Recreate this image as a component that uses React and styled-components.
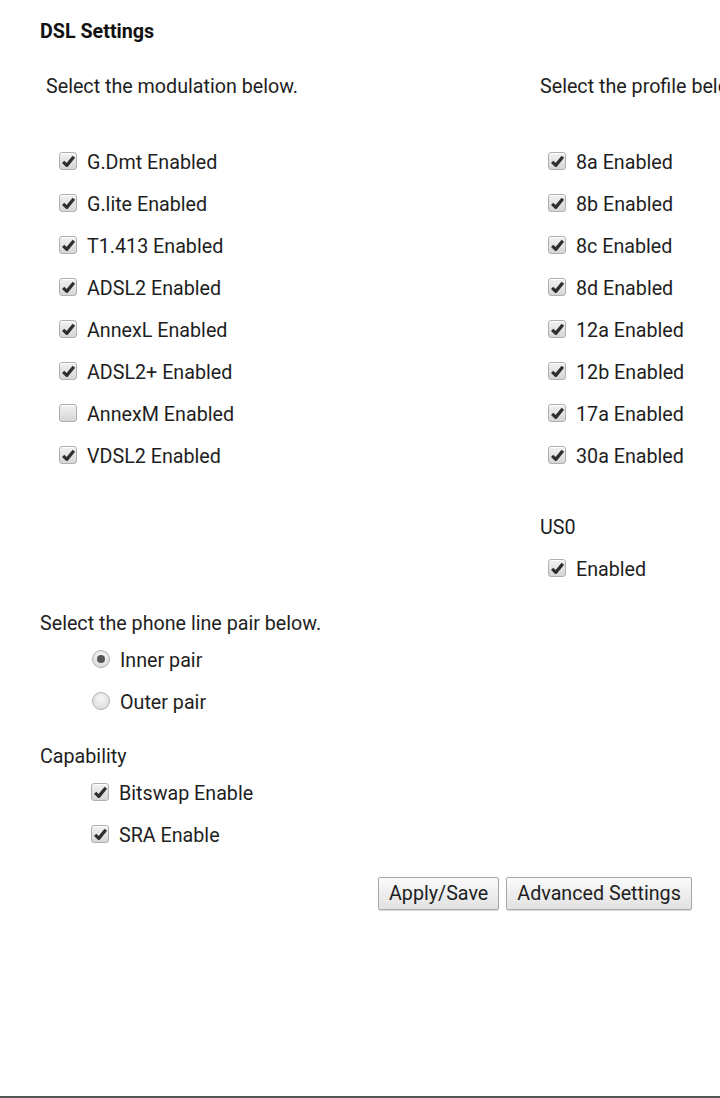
import React from "react";
import styled, { createGlobalStyle } from "styled-components";

const Global = createGlobalStyle`
  html, body { margin: 0; padding: 0; background: #fff; }
  body { font-family: Roboto, "Noto Sans", sans-serif; color: #1e1e1e; overflow: hidden; }
`;

const Page = styled.div`
  box-sizing: border-box;
  width: 720px;
  height: 1098px;
  border-bottom: 2px solid #555;
  padding: 20px 0 0 40px;
  overflow: hidden;
  display: flex;
  flex-direction: column;
`;

const Title = styled.div`
  font-weight: 700;
  font-size: 19.7px;
  line-height: 24px;
  color: #111;
`;

const Columns = styled.div`
  display: grid;
  grid-template-columns: 500px 300px;
  margin-top: 22px;
  white-space: nowrap;
`;

const Column = styled.div`
  display: flex;
  flex-direction: column;
`;

const Heading = styled.div`
  font-size: 19.7px;
  line-height: 42px;
  padding-left: ${(p) => p.$indent || 0}px;
  margin-bottom: ${(p) => p.$after || 0}px;
  margin-top: ${(p) => p.$before || 0}px;
`;

const Row = styled.label`
  display: flex;
  align-items: center;
  height: 42px;
  padding-left: ${(p) => p.$indent}px;
  font-size: 19.7px;
  gap: 10px;
`;

const Box = styled.span`
  box-sizing: border-box;
  width: 18px;
  height: 18px;
  border: 1px solid #b0b0b0;
  border-radius: 3px;
  background: linear-gradient(#f2f2f2, #d6d6d6);
  box-shadow: inset 0 1px 0 #fff;
  display: flex;
  align-items: center;
  justify-content: center;
  flex: none;
  margin-top: -4px;
`;

const Radio = styled.span`
  box-sizing: border-box;
  width: 18px;
  height: 18px;
  border: 1px solid #b0b0b0;
  border-radius: 50%;
  background: radial-gradient(circle at 50% 35%, #f6f6f6, #d6d6d6);
  display: flex;
  align-items: center;
  justify-content: center;
  flex: none;
  margin-top: -4px;
`;

const Dot = styled.span`
  width: 8px;
  height: 8px;
  border-radius: 50%;
  background: #555;
`;

const Text = styled.span`
  line-height: 42px;
`;

const Section = styled.div`
  font-size: 19.7px;
  line-height: 32px;
  margin-top: ${(p) => p.$before}px;
`;

const Buttons = styled.div`
  display: flex;
  gap: 7px;
  padding-left: 338px;
  margin-top: 20px;
`;

const Button = styled.button`
  font-family: Roboto, "Noto Sans", sans-serif;
  font-size: 19.7px;
  color: #1e1e1e;
  height: 33px;
  padding: 0 10px;
  border: 1px solid #a8a8a8;
  border-radius: 2px;
  background: linear-gradient(#fafafa, #e2e2e2);
  box-shadow: 0 1px 1px rgba(0, 0, 0, 0.15);
`;

const Check = () => (
  <svg width="15" height="15" viewBox="0 0 14 14">
    <path d="M2 7.4 L5.4 10.6 L12 2.6" fill="none" stroke="#2e2e2e" strokeWidth="3" strokeLinejoin="round" />
  </svg>
);

const CheckRow = ({ indent, checked = true, children }) => (
  <Row $indent={indent}>
    <Box>{checked && <Check />}</Box>
    <Text>{children}</Text>
  </Row>
);

const RadioRow = ({ indent, checked, children }) => (
  <Row $indent={indent}>
    <Radio>{checked && <Dot />}</Radio>
    <Text>{children}</Text>
  </Row>
);

const modulations = [
  ["G.Dmt Enabled", true],
  ["G.lite Enabled", true],
  ["T1.413 Enabled", true],
  ["ADSL2 Enabled", true],
  ["AnnexL Enabled", true],
  ["ADSL2+ Enabled", true],
  ["AnnexM Enabled", false],
  ["VDSL2 Enabled", true],
];

const profiles = ["8a", "8b", "8c", "8d", "12a", "12b", "17a", "30a"];

export default function App() {
  return (
    <>
      <Global />
      <Page>
        <Title>DSL Settings</Title>
        <Columns>
          <Column>
            <Heading $indent={6} $after={34}>Select the modulation below.</Heading>
            {modulations.map(([label, on]) => (
              <CheckRow key={label} indent={19} checked={on}>{label}</CheckRow>
            ))}
          </Column>
          <Column>
            <Heading $indent={0} $after={34}>Select the profile below.</Heading>
            {profiles.map((p) => (
              <CheckRow key={p} indent={8}>{p} Enabled</CheckRow>
            ))}
            <Heading $before={29}>US0</Heading>
            <CheckRow indent={8}>Enabled</CheckRow>
          </Column>
        </Columns>
        <Section $before={17}>Select the phone line pair below.</Section>
        <RadioRow indent={52} checked>Inner pair</RadioRow>
        <RadioRow indent={52}>Outer pair</RadioRow>
        <Section $before={17}>Capability</Section>
        <CheckRow indent={51}>Bitswap Enable</CheckRow>
        <CheckRow indent={51}>SRA Enable</CheckRow>
        <Buttons>
          <Button>Apply/Save</Button>
          <Button>Advanced Settings</Button>
        </Buttons>
      </Page>
    </>
  );
}
